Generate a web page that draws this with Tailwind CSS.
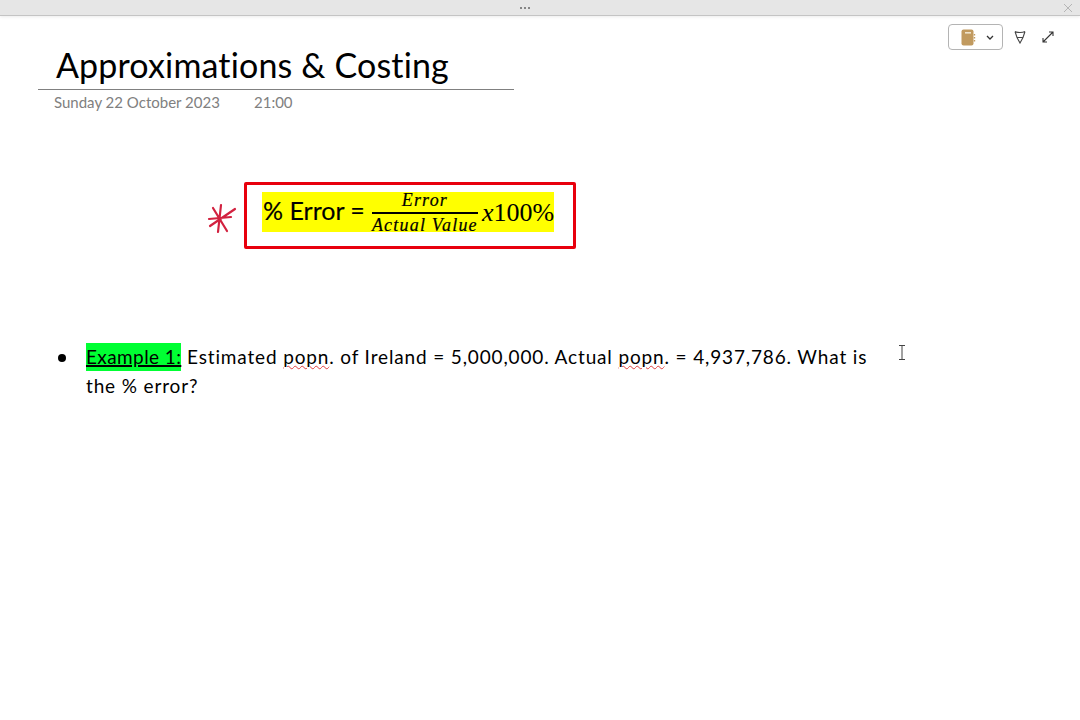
<!DOCTYPE html>
<html lang="en">
<head>
    <meta charset="UTF-8">
    <title>Approximations &amp; Costing</title>
    <script src="https://cdn.jsdelivr.net/npm/@tailwindcss/browser@4"></script>
</head>
<body class="w-[1080px] h-[720px] overflow-hidden bg-white relative font-['Lato',sans-serif]">
    <!-- Top bar -->
    <div class="h-[16px] bg-[#e6e6e6] border-b border-[#c4c4c4] shadow-[0_1px_3px_rgba(0,0,0,0.08)] flex items-center justify-between pl-[520px] pr-[7px]">
        <div class="flex gap-[2px]">
            <span class="w-[2px] h-[2px] rounded-full bg-[#666]"></span>
            <span class="w-[2px] h-[2px] rounded-full bg-[#666]"></span>
            <span class="w-[2px] h-[2px] rounded-full bg-[#666]"></span>
        </div>
        <svg class="w-[10px] h-[10px]" viewBox="0 0 10 10" fill="none" stroke="#b5b5b5" stroke-width="1"><path d="M1 1l8 8M9 1l-8 8"/></svg>
    </div>

    <!-- Toolbar -->
    <div class="absolute top-[24px] right-[26px] flex items-center">
        <div class="w-[55px] h-[26px] border border-[#b4b4b4] rounded-[4px] bg-white flex items-center pl-[12px] gap-[10px] mr-[11px]">
            <svg class="w-[15px] h-[17px]" viewBox="0 0 15 17">
                <rect x="0.5" y="0.5" width="12" height="16" rx="2" fill="#c19a5f"/>
                <rect x="4" y="3" width="6" height="1.6" fill="#efe3cc"/>
                <path d="M13.5 5v1.5M13.5 8v1.5M13.5 11v1.5" stroke="#c19a5f" stroke-width="1.4"/>
            </svg>
            <svg class="w-[8px] h-[5px]" viewBox="0 0 8 5" fill="none" stroke="#333" stroke-width="1.3"><path d="M1 1l3 3 3-3"/></svg>
        </div>
        <svg class="w-[12px] h-[14px] mr-[16px]" viewBox="0 0 12 14" fill="none" stroke="#444" stroke-width="1.1"><path d="M1 1.5c2.5 1.4 7.5 1.4 10 0M1 1.5l2 6h6l2-6M3 7.5l3 5.5 3-5.5"/></svg>
        <svg class="w-[12px] h-[12px]" viewBox="0 0 12 12" fill="none" stroke="#333" stroke-width="1.1"><path d="M1 11l10-10M7 1h4v4M1 7v4h4"/></svg>
    </div>

    <!-- Page title -->
    <div class="pt-[26px] w-[514px]">
        <h1 class="pl-[56px] text-[34px] leading-[46px] text-black font-normal font-['Lato',sans-serif] tracking-[0.15px]">Approximations &amp; Costing</h1>
        <div class="ml-[38px] h-px bg-[#808080] mt-[1px]"></div>
        <div class="pl-[54px] pt-[3px] flex text-[15px] leading-[18px] text-[#808080]">
            <span class="w-[200px]">Sunday 22 October 2023</span>
            <span>21:00</span>
        </div>
    </div>

    <!-- Formula -->
    <div class="mt-[71px] ml-[207px] flex items-center gap-[7px]">
        <svg class="w-[30px] h-[36px]" viewBox="0 0 30 36" fill="none" stroke="#d2213f" stroke-width="2.2" stroke-linecap="round"><path d="M14 7L11 34M6 10l14 23M28 11L3 28M2 21l22-2"/></svg>
        <div class="w-[332px] h-[67px] border-[3px] border-[#e8000d] rounded-[2px] pl-[15px] pt-[7px]">
            <div class="w-[292px] h-[40px] bg-[#ffff00] flex items-center pl-[1px] text-black whitespace-nowrap">
                <span class="text-[25px] font-['Lato',sans-serif] [-webkit-text-stroke:0.15px_black] -mt-[2px]">% Error =</span>
                <div class="ml-[7px] self-start -mt-[2px] flex flex-col items-center font-['Liberation_Serif',serif] italic text-[18px] tracking-[1.2px] [-webkit-text-stroke:0.2px_black]">
                    <span class="leading-[20px]">Error</span>
                    <span class="w-[106px] h-[2px] bg-black mt-[2px]"></span>
                    <span class="leading-[22px]">Actual Value</span>
                </div>
                <span class="ml-[4px] font-['Liberation_Serif',serif] text-[26px]"><i>x</i>100%</span>
            </div>
        </div>
    </div>

    <!-- Example -->
    <div class="mt-[93px] ml-[58px] w-[830px] flex text-[19px] leading-[29px] text-black">
        <span class="w-[28px] shrink-0 pt-[12px]"><span class="block w-[8px] h-[8px] rounded-full bg-black"></span></span>
        <p class="tracking-[0.85px]"><span class="bg-[#00ff33] underline decoration-2 pt-[2px] pb-[3px] tracking-[0.4px]">Example 1:</span> Estimated <span class="underline decoration-wavy decoration-[#e04040] decoration-1">popn</span>. of Ireland = 5,000,000. Actual <span class="underline decoration-wavy decoration-[#e04040] decoration-1">popn</span>. = 4,937,786. What is the % error?</p>
    </div>

    <!-- Text cursor -->
    <svg class="absolute left-[898px] top-[345px] w-[8px] h-[15px]" viewBox="0 0 8 15" fill="none" stroke="#444" stroke-width="1"><path d="M1 .5h6M1 14.5h6M4 .5v14"/></svg>
</body>
</html>
